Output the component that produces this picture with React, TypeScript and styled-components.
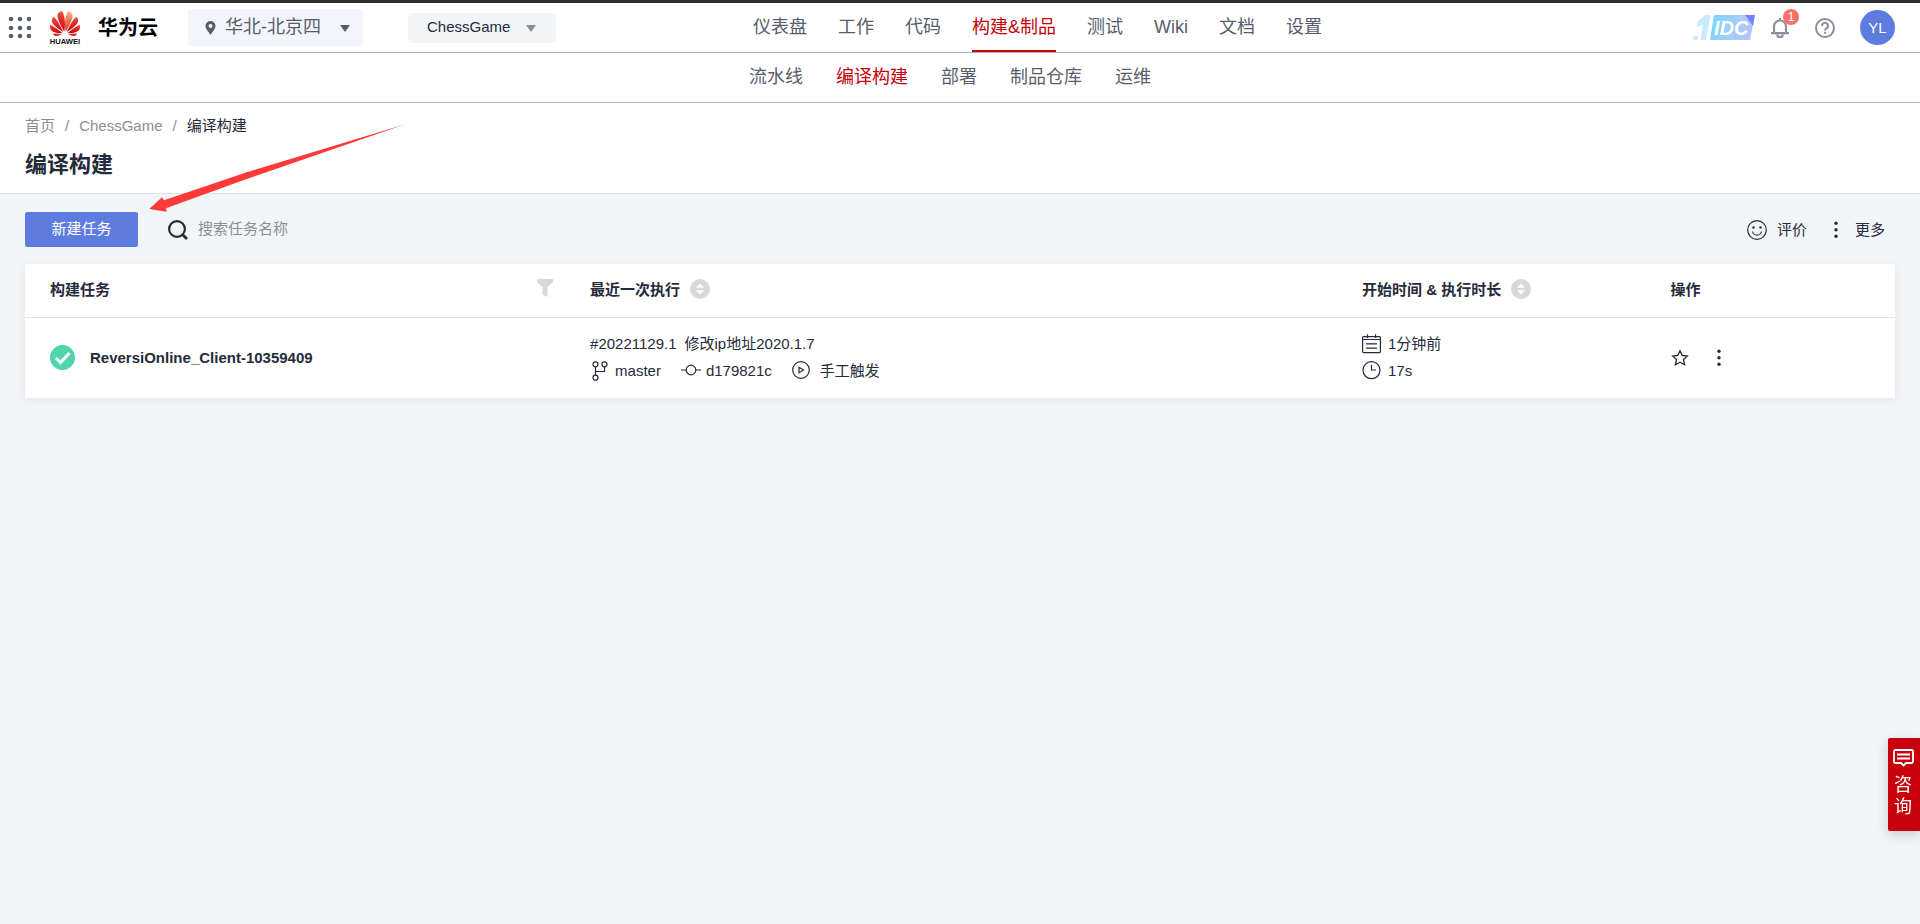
import React from 'react';
import styled, { createGlobalStyle } from 'styled-components';

const INK = '#252b3a';
const MUTED = '#8a8e99';
const SLATE = '#575d6c';
const RED = '#c7000b';
const BLUE = '#5e7ce0';

const GlobalStyle = createGlobalStyle`
  *, *::before, *::after { box-sizing: border-box; }
  body {
    margin: 0;
    background: #f2f5f8;
    color: ${INK};
    font: 15px/22px "Liberation Sans", "Noto Sans CJK SC", sans-serif;
  }
  button, input, select { font: inherit; color: inherit; }
  button { border: 0; padding: 0; background: none; cursor: pointer; }
  a { color: inherit; text-decoration: none; }
  svg { display: block; flex: none; }
`;

const Page = styled.div`
  min-height: 100vh;
  position: relative;
`;

const TopBar = styled.header`
  display: flex;
  align-items: center;
  height: 53px;
  padding: 0 25px 0 8px;
  background: #fff;
  border-top: 3px solid #2f2f2f;
  border-bottom: 1px solid #adb0b8;
`;

const Brand = styled.a`
  display: flex;
  align-items: center;
  margin-left: 18px;
  gap: 17px;
  color: #000;
  font-size: 20px;
  font-weight: 700;
  line-height: 28px;
`;

const Picker = styled.label<{ $tone: string }>`
  position: relative;
  display: flex;
  align-items: center;
  background: ${(p) => p.$tone};
  border-radius: 4px;
`;

const RegionPicker = styled(Picker)`
  width: 175px;
  height: 37px;
  margin-left: 30px;
  padding-left: 17px;
  gap: 9px;
`;

const ProjectPicker = styled(Picker)`
  width: 148px;
  height: 30px;
  margin-left: 45px;
  padding-left: 19px;
`;

const PickerSelect = styled.select<{ $large?: boolean }>`
  appearance: none;
  flex: 1;
  min-width: 0;
  height: 100%;
  padding: 0 0 2px;
  border: 0;
  background: transparent;
  font-size: ${(p) => (p.$large ? 18 : 15)}px;
  color: ${(p) => (p.$large ? SLATE : INK)};
`;

const Caret = styled.span<{ $color: string; $right: number }>`
  position: absolute;
  right: ${(p) => p.$right}px;
  top: calc(50% - 3px);
  border: 5px solid transparent;
  border-top: 7px solid ${(p) => p.$color};
  border-bottom: 0;
  pointer-events: none;
`;

const MainNav = styled.nav`
  display: flex;
  align-self: stretch;
  gap: 31px;
  margin: 0 auto 0 197px;
`;

const SubNav = styled.nav`
  display: flex;
  justify-content: center;
  gap: 33px;
  height: 50px;
  padding-right: 20px;
  background: #fff;
  border-bottom: 1px solid #adb0b8;
`;

const NavLink = styled.a<{ $active?: boolean; $underline?: boolean }>`
  display: flex;
  align-items: center;
  font-size: 18px;
  color: ${(p) => (p.$active ? RED : SLATE)};
  border-bottom: 2px solid ${(p) => (p.$underline ? RED : 'transparent')};
`;

const Tools = styled.div`
  display: flex;
  align-items: center;
`;

const BellButton = styled.button`
  position: relative;
  margin-left: 15px;
`;

const Badge = styled.span`
  position: absolute;
  top: -9px;
  left: 12px;
  width: 16px;
  height: 16px;
  border-radius: 50%;
  background: #f66f6a;
  color: #fff;
  font-size: 12px;
  line-height: 16px;
  text-align: center;
`;

const HelpButton = styled.button`
  margin-left: 26px;
`;

const Avatar = styled.button`
  width: 35px;
  height: 35px;
  margin-left: 25px;
  border-radius: 50%;
  background: ${BLUE};
  color: #fff;
`;

const PageHead = styled.section`
  height: 91px;
  padding: 12px 25px 0;
  background: #fff;
  border-bottom: 1px solid #dfe1e6;
`;

const Crumbs = styled.nav`
  display: flex;
  gap: 10px;
  color: ${MUTED};
`;

const CurrentCrumb = styled.span`
  color: ${INK};
`;

const Title = styled.h1`
  margin: 12px 0 0;
  font-size: 22px;
  line-height: 32px;
  font-weight: 700;
`;

const Toolbar = styled.div`
  display: flex;
  align-items: center;
  padding: 18px 35px 17px 25px;
`;

const PrimaryButton = styled.button`
  width: 113px;
  height: 35px;
  padding-bottom: 2px;
  border-radius: 2px;
  background: ${BLUE};
  color: #fff;
`;

const Search = styled.label`
  display: flex;
  align-items: center;
  gap: 10px;
  flex: 1;
  margin-left: 30px;
`;

const SearchInput = styled.input`
  width: 240px;
  padding: 0 0 2px;
  border: 0;
  outline: 0;
  background: transparent;
  &::placeholder { color: ${MUTED}; opacity: 1; }
`;

const ToolButton = styled.button<{ $gap: number; $left?: number }>`
  display: flex;
  align-items: center;
  gap: ${(p) => p.$gap}px;
  margin-left: ${(p) => p.$left ?? 0}px;
`;

const Card = styled.section`
  margin: 0 25px;
  background: #fff;
  border-radius: 2px;
  box-shadow: 0 2px 8px rgba(37, 43, 58, 0.08);
`;

const Table = styled.table`
  width: 100%;
  border-collapse: collapse;
  table-layout: fixed;
`;

const HeadCell = styled.th<{ $width?: string }>`
  width: ${(p) => p.$width ?? 'auto'};
  height: 53px;
  padding: 0 0 0 25px;
  border-bottom: 1px solid #dfe1e6;
  text-align: left;
  font-weight: 700;
`;

const Cell = styled.td`
  height: 81px;
  padding: 0 0 0 25px;
`;

const HeadContent = styled.div<{ $spread?: boolean }>`
  display: flex;
  align-items: flex-start;
  gap: 10px;
  justify-content: ${(p) => (p.$spread ? 'space-between' : 'flex-start')};
  padding-right: ${(p) => (p.$spread ? 12 : 0)}px;
`;

const JobLink = styled.a`
  display: flex;
  align-items: center;
  gap: 15px;
  font-weight: 700;
`;

const Lines = styled.div`
  display: grid;
  row-gap: 5px;
`;

const Line = styled.div<{ $gap: number }>`
  display: flex;
  align-items: center;
  gap: ${(p) => p.$gap}px;
`;

const Meta = styled.span<{ $gap: number }>`
  display: flex;
  align-items: center;
  gap: ${(p) => p.$gap}px;
`;

const Actions = styled.div`
  display: flex;
  align-items: center;
  gap: 28px;
`;

const Consult = styled.button`
  position: fixed;
  right: 0;
  bottom: 93px;
  display: flex;
  flex-direction: column;
  align-items: center;
  gap: 7px;
  width: 32px;
  height: 93px;
  padding: 11px 6px 0 4px;
  border-radius: 2px 0 0 2px;
  background: ${RED};
  color: #fff;
  font-size: 18px;
  line-height: 22px;
  box-shadow: 0 4px 12px rgba(37, 43, 58, 0.2);
`;

const Arrow = styled.svg`
  position: absolute;
  left: 149px;
  top: 123px;
  pointer-events: none;
`;

const AppsIcon = () => (
  <svg width="23" height="23" viewBox="0 0 23 23" fill={SLATE}>
    {[3, 12, 20].map((y) => [3, 12, 21].map((x) => <circle key={`${x}-${y}`} cx={x} cy={y} r="2.3" />))}
  </svg>
);

const HuaweiLogo = () => (
  <svg width="32" height="34" viewBox="0 0 32 34">
    <defs>
      <linearGradient id="petal" x1="0" y1="0" x2="0" y2="1">
        <stop offset="0" stopColor="#f0503c" />
        <stop offset="0.6" stopColor="#e01f1c" />
        <stop offset="1" stopColor="#b50d12" />
      </linearGradient>
      <linearGradient id="petalLight" x1="0" y1="0" x2="0" y2="1">
        <stop offset="0" stopColor="#f8b08a" />
        <stop offset="1" stopColor="#e4331f" />
      </linearGradient>
    </defs>
    <g transform="translate(0.500 -1) scale(0.970 0.920)">
      <g fill="url(#petal)">
        <path d="M15.3 23.5C16.4 17 16.400 6 12.800 1.300C10 1.600 8 4 8.300 7C8.800 12 12.500 18.500 15.300 23.500Z" />
        <path d="M14.200 24C11.500 17.500 8 10.500 4.300 7.300C2 9.500 1.800 12.500 3.600 15C6 18.500 10.500 21.800 14.200 24Z" />
        <path d="M17.800 24C20.500 17.500 24 10.500 27.700 7.300C30 9.500 30.200 12.500 28.400 15C26 18.500 21.500 21.800 17.800 24Z" />
        <path d="M13.500 25.100C9.500 21.600 4.500 17.500 0.700 15.900C-0.200 19 1 22.200 3.800 23.600C6.500 24.900 10.200 25.100 13.500 25.100Z" />
        <path d="M18.500 25.100C22.500 21.600 27.500 17.500 31.300 15.900C32.200 19 31 22.200 28.200 23.600C25.500 24.900 21.800 25.100 18.500 25.100Z" />
        <path d="M13.200 26.100C10 25.700 6 25.500 3.200 25.700C4.800 28.300 7.500 28.700 9.600 27.700C10.800 27.200 12.200 26.700 13.200 26.100Z" />
        <path d="M18.800 26.100C22 25.700 26 25.500 28.800 25.700C27.200 28.300 24.500 28.700 22.400 27.700C21.200 27.200 19.800 26.700 18.800 26.100Z" />
      </g>
      <path fill="url(#petalLight)" d="M16.700 23.500C15.600 17 15.600 6 19.200 1.300C22 1.600 24 4 23.700 7C23.200 12 19.500 18.500 16.700 23.500Z" />
    </g>
    <text x="16" y="32.500" textAnchor="middle" fontFamily="Liberation Sans" fontWeight="700" fontSize="7.600" fill="#111">HUAWEI</text>
  </svg>
);

const PinIcon = () => (
  <svg width="11" height="14" viewBox="0 0 11 14" fill={SLATE}>
    <path fillRule="evenodd" d="M5.500 0A5 5 0 0 0 .5 5C.5 8 3.500 10.500 5.500 14C7.500 10.500 10.500 8 10.500 5A5 5 0 0 0 5.500 0ZM5.500 3A2 2 0 1 1 5.500 7A2 2 0 1 1 5.500 3Z" />
  </svg>
);

const IdcLogo = () => (
  <svg width="63" height="26" viewBox="0 0 63 26">
    <defs>
      <linearGradient id="idc" x1="0" y1="0" x2="1" y2="0.3">
        <stop offset="0" stopColor="#70d6fb" />
        <stop offset="0.65" stopColor="#a6cdfc" />
        <stop offset="1" stopColor="#b4c4fd" />
      </linearGradient>
    </defs>
    <path d="M21 0H62L57 25H17Z" fill="url(#idc)" />
    <path d="M52 0H62L60 11Z" fill="#7280fb" />
    <path d="M12 0H17.500L13 25H7.500L10 9.500L3.500 12L4.500 6.500Z" fill="#c9e9fd" />
    <path d="M0.800 21H5L4.200 25H0Z" fill="#c9e9fd" />
    <text x="21" y="19.500" fontFamily="Liberation Sans" fontStyle="italic" fontWeight="700" fontSize="20" fill="#fff">IDC</text>
  </svg>
);

const BellIcon = () => (
  <svg width="18" height="20" viewBox="0 0 18 20" fill="none" stroke={MUTED} strokeWidth="2.200">
    <path d="M9 0V2M0 15.200H18M3 15V8.500A6 6 0 0 1 15 8.500V15M6.300 16.500A2.700 2.700 0 0 0 11.700 16.500" />
  </svg>
);

const HelpIcon = () => (
  <svg width="20" height="20" viewBox="0 0 20 20" fill="none" stroke={MUTED} strokeWidth="2">
    <circle cx="10" cy="10" r="9" />
    <path d="M7 8A3 3 0 1 1 11.300 10.500C10.300 11 10 11.400 10 12.500" />
    <path d="M10 13.800V15.800" />
  </svg>
);

const SearchIcon = () => (
  <svg width="20" height="20" viewBox="0 0 20 20" fill="none" stroke={INK} strokeWidth="2.200">
    <circle cx="9" cy="9" r="7.900" />
    <path d="M14.500 14.500L19 19" strokeWidth="2.800" />
  </svg>
);

const SmileIcon = () => (
  <svg width="20" height="20" viewBox="0 0 20 20" fill="none" stroke={INK} strokeWidth="1.200">
    <circle cx="10" cy="10" r="9.300" />
    <path d="M5.500 11.500A4.600 4.600 0 0 0 14.500 11.500" />
    <circle cx="6.500" cy="7.500" r="1.200" fill={INK} stroke="none" />
    <circle cx="13.500" cy="7.500" r="1.200" fill={INK} stroke="none" />
  </svg>
);

const DotsIcon = () => (
  <svg width="4" height="18" viewBox="0 0 4 18" fill={INK}>
    <circle cx="2" cy="2.200" r="1.700" />
    <circle cx="2" cy="8.700" r="1.700" />
    <circle cx="2" cy="15.200" r="1.700" />
  </svg>
);

const FilterIcon = () => (
  <svg width="16" height="18" viewBox="0 0 16 18" fill="#d7d8da">
    <path d="M0 0H16V3L10.500 8V18L5.500 15.500V8L0 3Z" />
  </svg>
);

const SortIcon = () => (
  <svg width="20" height="20" viewBox="0 0 20 20">
    <circle cx="10" cy="10" r="10" fill="#d7d8da" />
    <path d="M10 4.500L14 8.700H6ZM10 15.500L14 11.300H6Z" fill="#fff" />
  </svg>
);

const SuccessIcon = () => (
  <svg width="25" height="25" viewBox="0 0 25 25">
    <circle cx="12.500" cy="12.500" r="12.500" fill="#50d4ab" />
    <path d="M6 13L10.500 17.500L19.500 8" fill="none" stroke="#fff" strokeWidth="3" />
  </svg>
);

const BranchIcon = () => (
  <svg width="18" height="20" viewBox="0 0 18 20" fill="none" stroke={INK} strokeWidth="1.200">
    <circle cx="5.500" cy="3.300" r="2.500" />
    <circle cx="14.500" cy="3.300" r="2.500" />
    <circle cx="5.500" cy="16.700" r="2.500" />
    <path d="M5.500 5.800V14.200M14.500 5.800V10.500H5.500" />
  </svg>
);

const CommitIcon = () => (
  <svg width="20" height="20" viewBox="0 0 20 20" fill="none" stroke={INK} strokeWidth="1.200">
    <circle cx="10" cy="9" r="4.800" />
    <path d="M0 9H5.200M14.800 9H20" />
  </svg>
);

const PlayIcon = () => (
  <svg width="18" height="20" viewBox="0 0 18 20" fill="none" stroke={INK} strokeWidth="1.200">
    <circle cx="9" cy="9" r="8.300" />
    <path d="M7 6.300V11.700L11.500 9Z" />
  </svg>
);

const CalendarIcon = () => (
  <svg width="19" height="20" viewBox="0 0 19 20" fill="none" stroke={INK} strokeWidth="1.200">
    <rect x="0.600" y="2.600" width="17.800" height="16" rx="1" />
    <path d="M.6 5.500H18.400M5.500 .3V4M13.500 .3V4M4 9.800H15M4 14.200H15" />
  </svg>
);

const ClockIcon = () => (
  <svg width="19" height="20" viewBox="0 0 19 20" fill="none" stroke={INK} strokeWidth="1.200">
    <circle cx="9.500" cy="9.200" r="8.500" />
    <path d="M9.500 3.800V9H14" />
  </svg>
);

const StarIcon = () => (
  <svg width="18" height="18" viewBox="0 0 18 18" fill="none" stroke={INK} strokeWidth="1.300">
    <path d="M9 1.800L11.200 6.400L16.300 7L12.500 10.500L13.600 15.700L9 13.200L4.400 15.700L5.500 10.500L1.700 7L6.800 6.400Z" />
  </svg>
);

const ChatIcon = () => (
  <svg width="21" height="18" viewBox="0 0 21 18" fill="none" stroke="#fff" strokeWidth="1.800">
    <path d="M2.500 1H18.500Q20 1 20 2.500V12.500Q20 14 18.500 14H13L10.500 16.500L8 14H2.500Q1 14 1 12.500V2.500Q1 1 2.500 1ZM4 5.500H17M4 9.500H17" />
  </svg>
);

const mainLinks = ['仪表盘', '工作', '代码', '构建&制品', '测试', 'Wiki', '文档', '设置'];
const subLinks = ['流水线', '编译构建', '部署', '制品仓库', '运维'];

export default function App() {
  return (
    <Page>
      <GlobalStyle />
      <TopBar>
        <button aria-label="服务列表"><AppsIcon /></button>
        <Brand href="#"><HuaweiLogo />华为云</Brand>
        <RegionPicker $tone="#f2f5fc">
          <PinIcon />
          <PickerSelect $large aria-label="区域"><option>华北-北京四</option></PickerSelect>
          <Caret $color={SLATE} $right={13} />
        </RegionPicker>
        <ProjectPicker $tone="#f2f5f8">
          <PickerSelect aria-label="项目"><option>ChessGame</option></PickerSelect>
          <Caret $color={MUTED} $right={20} />
        </ProjectPicker>
        <MainNav>
          {mainLinks.map((label) => {
            const active = label === '构建&制品';
            return <NavLink key={label} href="#" $active={active} $underline={active}>{label}</NavLink>;
          })}
        </MainNav>
        <Tools>
          <IdcLogo />
          <BellButton aria-label="通知"><BellIcon /><Badge>1</Badge></BellButton>
          <HelpButton aria-label="帮助"><HelpIcon /></HelpButton>
          <Avatar>YL</Avatar>
        </Tools>
      </TopBar>
      <SubNav>
        {subLinks.map((label) => (
          <NavLink key={label} href="#" $active={label === '编译构建'}>{label}</NavLink>
        ))}
      </SubNav>
      <PageHead>
        <Crumbs>
          <a href="#">首页</a><span>/</span><a href="#">ChessGame</a><span>/</span>
          <CurrentCrumb>编译构建</CurrentCrumb>
        </Crumbs>
        <Title>编译构建</Title>
      </PageHead>
      <main>
        <Toolbar>
          <PrimaryButton>新建任务</PrimaryButton>
          <Search><SearchIcon /><SearchInput placeholder="搜索任务名称" aria-label="搜索任务名称" /></Search>
          <ToolButton $gap={10}><SmileIcon />评价</ToolButton>
          <ToolButton $gap={17} $left={27}><DotsIcon />更多</ToolButton>
        </Toolbar>
        <Card>
          <Table>
            <thead>
              <tr>
                <HeadCell $width="28.880%"><HeadContent $spread>构建任务<FilterIcon /></HeadContent></HeadCell>
                <HeadCell $width="41.280%"><HeadContent>最近一次执行<SortIcon /></HeadContent></HeadCell>
                <HeadCell $width="16.500%"><HeadContent>开始时间 &amp; 执行时长<SortIcon /></HeadContent></HeadCell>
                <HeadCell>操作</HeadCell>
              </tr>
            </thead>
            <tbody>
              <tr>
                <Cell><JobLink href="#"><SuccessIcon />ReversiOnline_Client-10359409</JobLink></Cell>
                <Cell>
                  <Lines>
                    <Line $gap={8}><span>#20221129.1</span><span>修改ip地址2020.1.7</span></Line>
                    <Line $gap={20}>
                      <Meta $gap={7}><BranchIcon />master</Meta>
                      <Meta $gap={5}><CommitIcon />d179821c</Meta>
                      <Meta $gap={10}><PlayIcon />手工触发</Meta>
                    </Line>
                  </Lines>
                </Cell>
                <Cell>
                  <Lines>
                    <Line $gap={7}><CalendarIcon />1分钟前</Line>
                    <Line $gap={7}><ClockIcon />17s</Line>
                  </Lines>
                </Cell>
                <Cell>
                  <Actions>
                    <button aria-label="收藏"><StarIcon /></button>
                    <button aria-label="更多操作"><DotsIcon /></button>
                  </Actions>
                </Cell>
              </tr>
            </tbody>
          </Table>
        </Card>
      </main>
      <Consult><ChatIcon /><span>咨<br />询</span></Consult>
      <Arrow width="258" height="90" viewBox="0 0 258 90" fill="#fd3a37" aria-hidden="true">
        <path d="M0.300 86L13 74.300L15 77.300L97.700 49.300L257 1L97.700 56L17 85.300L17.700 88.700Z" />
      </Arrow>
    </Page>
  );
}
